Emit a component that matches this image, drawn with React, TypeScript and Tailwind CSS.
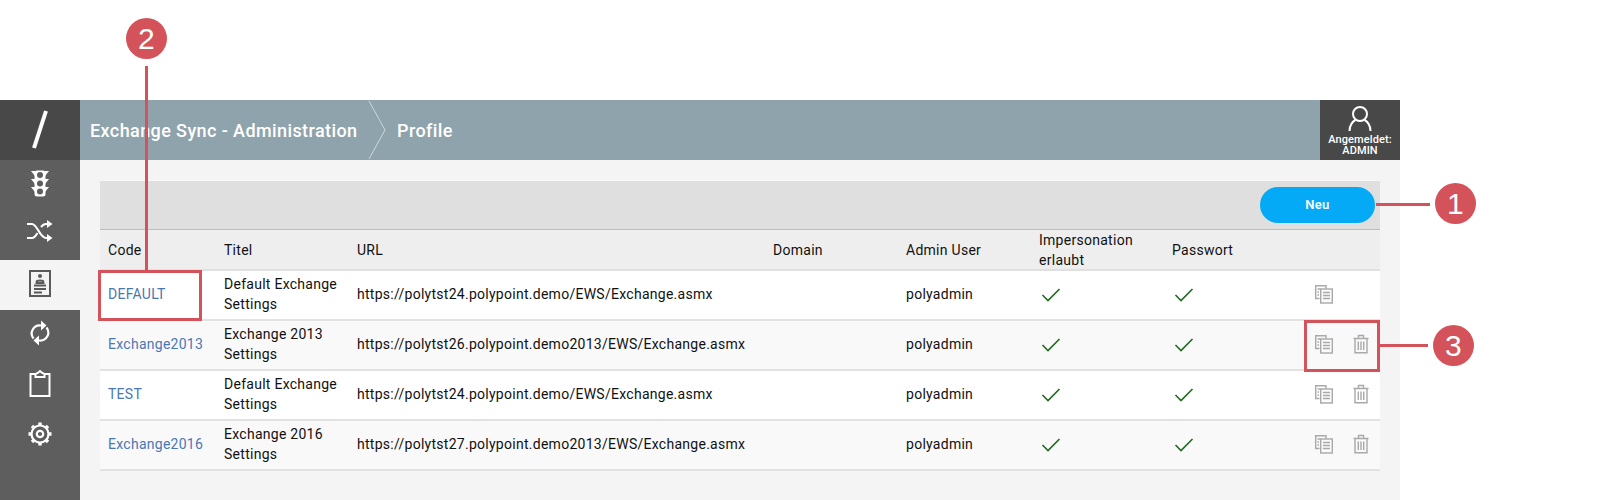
import React from "react";

const cols = "grid grid-cols-[116px_133px_416px_133px_133px_133px_133px_83px] items-center";

const rows = [
  { code: "DEFAULT", title: ["Default Exchange", "Settings"], url: "https://polytst24.polypoint.demo/EWS/Exchange.asmx", del: false, bg: "bg-white" },
  { code: "Exchange2013", title: ["Exchange 2013", "Settings"], url: "https://polytst26.polypoint.demo2013/EWS/Exchange.asmx", del: true, bg: "bg-[#f9f9f9]" },
  { code: "TEST", title: ["Default Exchange", "Settings"], url: "https://polytst24.polypoint.demo/EWS/Exchange.asmx", del: true, bg: "bg-white" },
  { code: "Exchange2016", title: ["Exchange 2016", "Settings"], url: "https://polytst27.polypoint.demo2013/EWS/Exchange.asmx", del: true, bg: "bg-[#f9f9f9]" },
];

function Check() {
  return (
    <svg width="20" height="16" viewBox="0 0 20 16" fill="none" className="ml-[2px] mt-[2px]">
      <path d="M1.500 8 L7 13.500 L18.500 2" stroke="#1f6a1f" strokeWidth="1.600" />
    </svg>
  );
}

function CopyIcon() {
  return (
    <svg width="20" height="20" viewBox="0 0 20 20" fill="none" stroke="#a9a9a9" strokeWidth="1.400">
      <path d="M12 4.500V1.700H1.700V14.500H5.500" fill="none" />
      <rect x="6.700" y="5" width="11.600" height="14" fill="#fbfbfb" />
      <path d="M9 8.500h7M9 11.500h7M9 14.500h7M3.500 5h3M3.500 8h1.500M3.500 11h1.500" />
    </svg>
  );
}

function TrashIcon() {
  return (
    <svg width="16" height="20" viewBox="0 0 16 20" fill="none" stroke="#a9a9a9" strokeWidth="1.400">
      <path d="M.5 4.500h15M5.500 4.500V1.500h5v3" />
      <path d="M2 4.500V18.700h12V4.500" />
      <path d="M5.300 7.500v8.500M8 7.500v8.500M10.700 7.500v8.500" />
    </svg>
  );
}

function Bubble({ n, className }: { n: string; className: string }) {
  return (
    <div className={`absolute w-[41px] h-[41px] rounded-full bg-[#d4525a] text-white flex items-center justify-center text-[30px] leading-none font-['Liberation_Sans',sans-serif] ${className}`}>
      {n}
    </div>
  );
}

export default function App() {
  return (
    <div className="relative w-[1600px] h-[500px] bg-white overflow-hidden font-['Roboto',sans-serif] text-[14px] tracking-[0.27px] text-[#111111]">
      <div className="h-[100px]" />
      <div className="flex w-[1400px] h-[400px]">
        <aside className="w-[80px] shrink-0 bg-[#5e5e5e] flex flex-col items-stretch">
          <div className="h-[60px] bg-[#484848] flex items-center justify-center">
            <svg width="20" height="40" viewBox="0 0 20 40"><path d="M16 1 L4 38" stroke="#fff" strokeWidth="4" /></svg>
          </div>
          <div className="h-[50px] flex items-start justify-center pt-[10px]">
            <svg width="20" height="27" viewBox="0 0 20 27" fill="#fff">
              <rect x="4.500" y="0.500" width="11" height="26" rx="2.500" />
              <path d="M1 1h4v5zM19 1h-4v5zM1 9h4v5zM19 9h-4v5zM1 17h4v5zM19 17h-4v5z" />
              <circle cx="10" cy="5" r="3" fill="#5e5e5e" /><circle cx="10" cy="13.500" r="3" fill="#5e5e5e" /><circle cx="10" cy="21.500" r="3" fill="#5e5e5e" />
            </svg>
          </div>
          <div className="h-[50px] flex items-start justify-center pt-[10px] -mt-[1px]">
            <svg width="28" height="24" viewBox="0 0 28 24" fill="none" stroke="#fff" strokeWidth="2.200">
              <path d="M1 5h5c5 0 8 14 14 14h3M1 19h5c2.500 0 4-2.500 5.500-5M15 8c1.300-1.700 3-3 5-3h3" />
              <path d="M21 1l5.500 4-5.500 4zM21 15l5.500 4-5.500 4z" fill="#fff" stroke="none" />
            </svg>
          </div>
          <div className="h-[50px] bg-[#f4f4f4] flex items-center justify-center mt-[1px] pb-[4px]">
            <svg width="22" height="27" viewBox="0 0 22 27" fill="none">
              <rect x="1" y="1" width="20" height="25" stroke="#5a5a5a" strokeWidth="2" />
              <circle cx="11" cy="6" r="2" fill="#5a5a5a" />
              <path d="M7.500 12c0-2 7-2 7 0v1h-7zM5 15.500h12M5 19h12M5 22.500h8" stroke="#5a5a5a" strokeWidth="1.800" />
            </svg>
          </div>
          <div className="h-[50px] flex items-center justify-center pb-[4px]">
            <svg width="20" height="26" viewBox="0 0 20 26" fill="none" stroke="#fff" strokeWidth="2.200">
              <path d="M3.500 18.500A8 8 0 0 1 10.500 5.500h2M16.500 7.500A8 8 0 0 1 9.500 20.500h-2" />
              <path d="M11 .5l5.500 5-5.500 5zM9 15.500l-5.500 5 5.500 5z" fill="#fff" stroke="none" />
            </svg>
          </div>
          <div className="h-[50px] flex items-center justify-center pb-[4px]">
            <svg width="22" height="27" viewBox="0 0 22 27" fill="none" stroke="#fff" strokeWidth="2">
              <path d="M6.500 4H1.500v22h19V4H15.500" />
              <path d="M6.500 7V4l3-1.500L11 1l1.500 1.500 3 1.500v3z" />
            </svg>
          </div>
          <div className="h-[50px] flex items-center justify-center pb-[3px]">
            <svg width="26" height="26" viewBox="0 0 26 26" fill="none" stroke="#fff">
              <circle cx="13" cy="13" r="8.500" strokeWidth="2.200" />
              <circle cx="13" cy="13" r="3.200" strokeWidth="2.200" />
              <path d="M13 1.500v3M13 21.500v3M1.500 13h3M21.500 13h3M5 5l2 2M19 19l2 2M21 5l-2 2M7 19l-2 2" strokeWidth="3.400" />
            </svg>
          </div>
        </aside>
        <div className="flex-1 flex flex-col bg-[#f4f4f4]">
          <header className="h-[60px] bg-[#8fa3ac] flex items-stretch text-white">
            <div className="pl-[10px] flex items-center text-[18px] tracking-[0.4px] font-medium w-[288px] whitespace-nowrap">Exchange Sync - Administration</div>
            <svg width="18" height="60" viewBox="0 0 18 60" fill="none" className="shrink-0"><path d="M1 1 L17 30 L1 59" stroke="#cdd7da" strokeWidth="1" /></svg>
            <div className="pl-[11px] flex items-center text-[18px] tracking-[0.4px] font-medium">Profile</div>
            <div className="ml-auto w-[80px] bg-[#484848] flex flex-col items-center">
              <svg width="24" height="28" viewBox="0 0 24 28" fill="none" stroke="#fff" strokeWidth="2" className="mt-[5px]">
                <circle cx="12" cy="9" r="7" />
                <path d="M1.500 26c0-6 3.500-10 6-11M22.500 26c0-6-3.500-10-6-11" />
              </svg>
              <div className="text-[11px] tracking-[0.1px] leading-[11px] font-medium text-center mt-[1px] whitespace-nowrap">Angemeldet:<br />ADMIN</div>
            </div>
          </header>
          <main className="pt-[20px] pl-[20px] pr-[20px]">
            <div className="h-[50px] bg-[#dfdfdf] border-t border-t-[#f8f8f8] border-b border-b-[#bdbdbd] flex items-center justify-end pr-[5px]">
              <button className="w-[115px] h-[36px] rounded-full bg-[#04aaf6] text-white text-[13px] font-semibold">Neu</button>
            </div>
            <div className={`${cols} h-[41px] pb-[2px] bg-[#eeeeee] border-b-2 border-b-[#e0e0e0] leading-[20px]`}>
              {["Code", "Titel", "URL", "Domain", "Admin User"].map((h) => <div key={h} className="pl-[8px]">{h}</div>)}
              <div className="pl-[8px]">Impersonation<br />erlaubt</div>
              <div className="pl-[8px]">Passwort</div>
              <div />
            </div>
            {rows.map((r) => (
              <div key={r.code} className={`${cols} h-[50px] pb-[2px] ${r.bg} border-b-2 border-b-[#e2e2e2] leading-[20px]`}>
                <div className="pl-[8px] text-[#4a78b4]">{r.code}</div>
                <div className="pl-[8px]">{r.title[0]}<br />{r.title[1]}</div>
                <div className="pl-[8px] whitespace-nowrap">{r.url}</div>
                <div />
                <div className="pl-[8px]">polyadmin</div>
                <div className="pl-[8px]"><Check /></div>
                <div className="pl-[8px]"><Check /></div>
                <div className="flex items-center pl-[17px] gap-[19px]">
                  <CopyIcon />
                  {r.del && <TrashIcon />}
                </div>
              </div>
            ))}
          </main>
        </div>
      </div>

      <Bubble n="2" className="left-[126px] top-[18px]" />
      <div className="absolute left-[145px] top-[66px] w-[3px] h-[205px] bg-[#d4525a]" />
      <div className="absolute left-[98px] top-[270px] w-[104px] h-[51px] border-[3px] border-[#d4525a]" />
      <Bubble n="1" className="left-[1435px] top-[183px]" />
      <div className="absolute left-[1376px] top-[203px] w-[54px] h-[3px] bg-[#d4525a]" />
      <Bubble n="3" className="left-[1433px] top-[325px]" />
      <div className="absolute left-[1380px] top-[344px] w-[48px] h-[3px] bg-[#d4525a]" />
      <div className="absolute left-[1304px] top-[320px] w-[76px] h-[52px] border-[3px] border-[#d4525a]" />
    </div>
  );
}
